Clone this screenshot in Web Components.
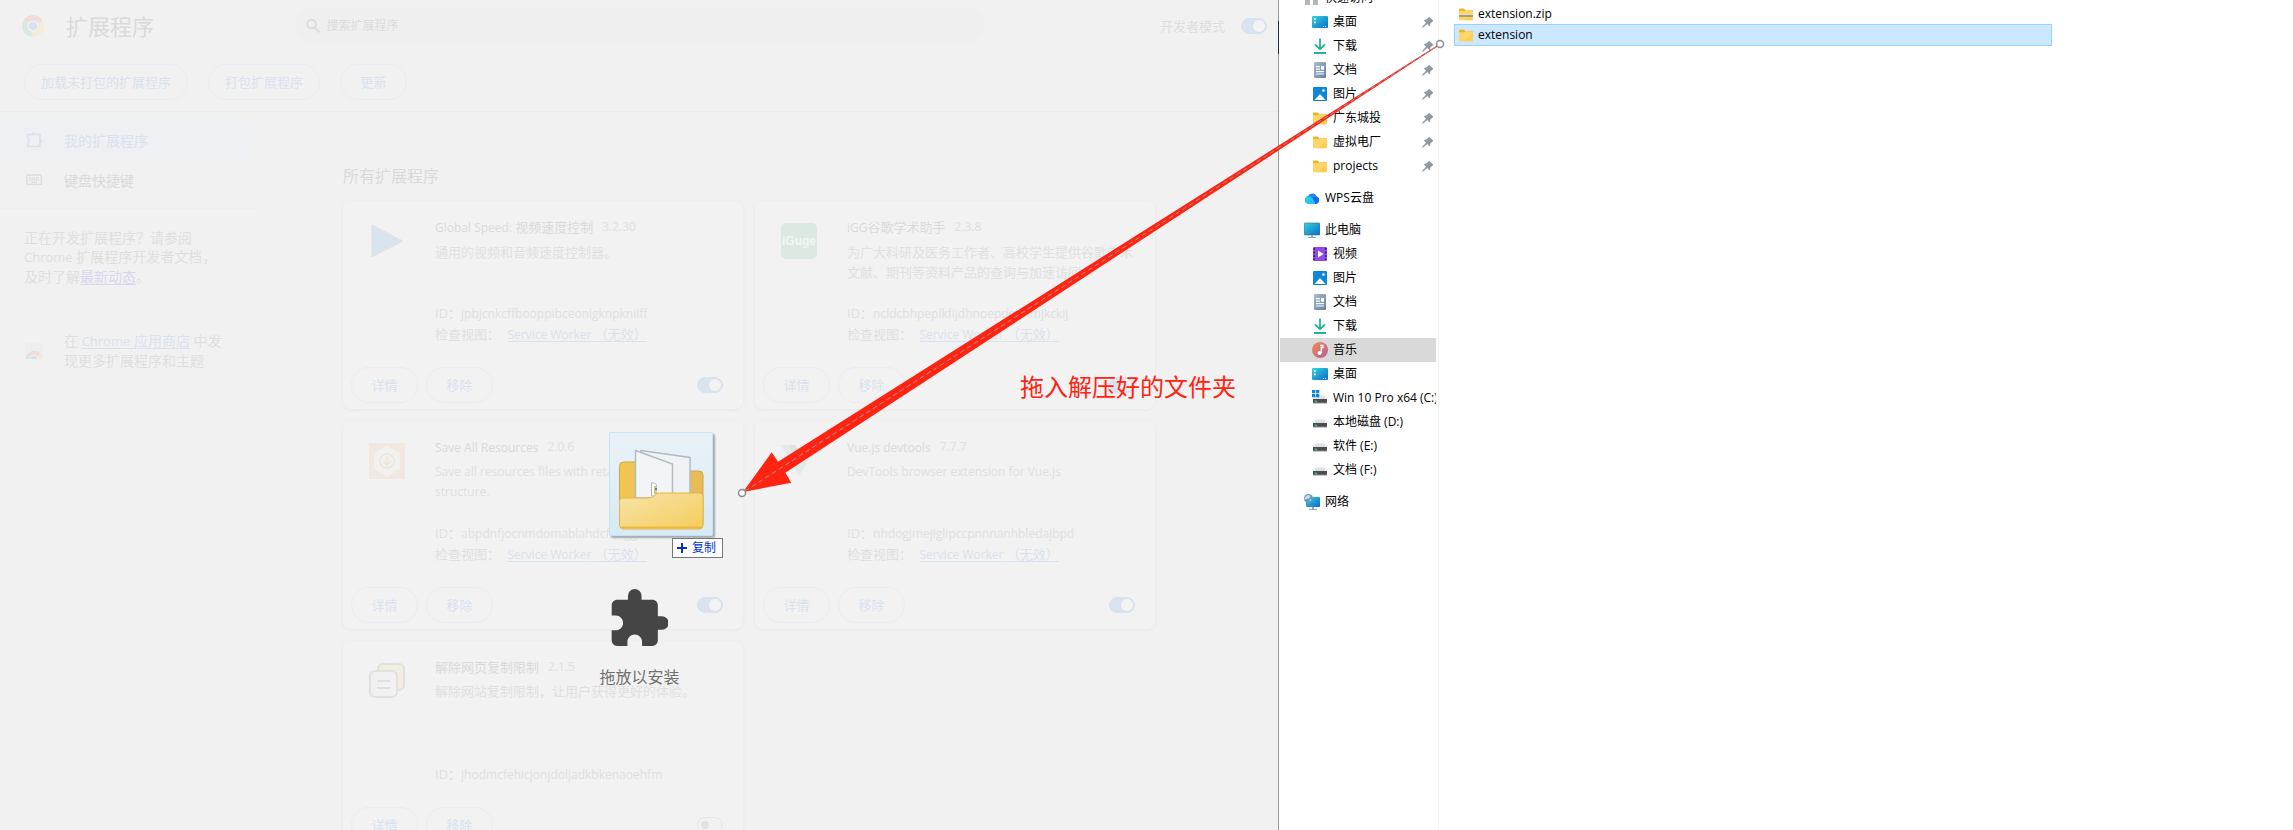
<!DOCTYPE html>
<html lang="zh-CN">
<head>
<meta charset="utf-8">
<title>扩展程序</title>
<style>
  html, body { margin: 0; height: 100%; }
  body {
    position: relative;
    display: grid;
    grid-template-columns: minmax(0, 1279fr) minmax(0, 1014fr);
    overflow: hidden;
    background: #fff;
    font-family: "Open Sans", "Noto Sans CJK SC", sans-serif;
    font-size: 13px;
    line-height: 20px;
  }
</style>
</head>
<body>
<ext-page>
  <ext-card name="Global Speed: 视频速度控制" version="3.2.30" icon="play" ext-id="jpbjcnkcffbooppibceonlgknpkniiff" worker enabled>通用的视频和音频速度控制器。</ext-card>
  <ext-card name="iGG谷歌学术助手" version="2.3.8" icon="iguge" ext-id="ncldcbhpeplkfijdhnoepdgdnmjkckij" worker enabled>为广大科研及医务工作者、高校学生提供谷歌学术文献、期刊等资料产品的查询与加速访问</ext-card>
  <ext-card lang="en" name="Save All Resources" version="2.0.6" icon="save" ext-id="abpdnfjocnmdomablahdcfnoggeeiedb" worker enabled>Save all resources files with retaining folder structure.</ext-card>
  <ext-card lang="en" name="Vue.js devtools" version="7.7.7" icon="vue" ext-id="nhdogjmejiglipccpnnnanhbledajbpd" worker enabled>DevTools browser extension for Vue.js</ext-card>
  <ext-card name="解除网页复制限制" version="2.1.5" icon="copy" ext-id="jhodmcfehicjonjdoljadkbkenaoehfm">解除网站复制限制，让用户获得更好的体验。</ext-card>
  <drop-hint slot="overlay">拖放以安装</drop-hint>
</ext-page>

<file-explorer>
  <tree-item slot="tree" icon="quick" root>快速访问</tree-item>
  <tree-item slot="tree" icon="desktop" pinned>桌面</tree-item>
  <tree-item slot="tree" icon="download" pinned>下载</tree-item>
  <tree-item slot="tree" icon="document" pinned>文档</tree-item>
  <tree-item slot="tree" icon="picture" pinned>图片</tree-item>
  <tree-item slot="tree" icon="folder" pinned>广东城投</tree-item>
  <tree-item slot="tree" icon="folder" pinned>虚拟电厂</tree-item>
  <tree-item slot="tree" icon="folder" pinned>projects</tree-item>
  <tree-item slot="tree" icon="cloud" root>WPS云盘</tree-item>
  <tree-item slot="tree" icon="pc" root>此电脑</tree-item>
  <tree-item slot="tree" icon="video">视频</tree-item>
  <tree-item slot="tree" icon="picture">图片</tree-item>
  <tree-item slot="tree" icon="document">文档</tree-item>
  <tree-item slot="tree" icon="download">下载</tree-item>
  <tree-item slot="tree" icon="music" selected>音乐</tree-item>
  <tree-item slot="tree" icon="desktop">桌面</tree-item>
  <tree-item slot="tree" icon="windisk">Win 10 Pro x64 (C:)</tree-item>
  <tree-item slot="tree" icon="disk">本地磁盘 (D:)</tree-item>
  <tree-item slot="tree" icon="disk">软件 (E:)</tree-item>
  <tree-item slot="tree" icon="disk">文档 (F:)</tree-item>
  <tree-item slot="tree" icon="network" root>网络</tree-item>
  <file-row icon="zip">extension.zip</file-row>
  <file-row icon="folder" selected>extension</file-row>
</file-explorer>

<drag-ghost>复制</drag-ghost>
<arrow-note>拖入解压好的文件夹</arrow-note>

<script>
const folder = `<svg viewBox="0 0 16 16"><path d="M1 3.2q0-.7.7-.7h4l1.400 1.600H14q.8 0 .8.8V8H1z" fill="#f0b429"/><path d="M1 5.200h5.400l1-.9h6.800q.7 0 .7.7v8.600q0 .7-.7.7H1.700q-.7 0-.7-.7z" fill="#fdd568"/><path d="M14.900 7v6.600q0 .7-.7.7H6z" fill="#fbc83f" opacity=".6"/></svg>`;
const disk = `<path d="M3.500 5.500h9L15 9H1z" fill="#dfe1e4"/><path d="M1 9h14v4H1z" fill="#4a4c50"/><path d="M1 12.500h14v1H1z" fill="#8d9095"/><path d="M3 10.500h2v1.300H3z" fill="#3fe06a"/>`;
const screenGrad = `<linearGradient id="g" x1="0" y1="0" x2="1" y2="1"><stop offset="0" stop-color="#35d3e0"/><stop offset="1" stop-color="#0b6cc4"/></linearGradient>`;
const ICONS = {
  chrome: `<svg viewBox="0 0 22 22"><path d="M11 11 1.500 5.500A11 11 0 0 1 20.500 5.500z" fill="#efdedd"/><path d="M11 11 1.500 5.500A11 11 0 0 0 11 22z" fill="#dce8df"/><path d="M11 11 20.500 5.500A11 11 0 0 1 10 22z" fill="#f4ecd8"/><circle cx="11" cy="11" r="5.500" fill="#f3f3f3"/><circle cx="11" cy="11" r="4.300" fill="#d7e2f2"/></svg>`,
  search: `<svg viewBox="0 0 16 16" fill="none" stroke="#dcdcdc" stroke-width="2"><circle cx="6.500" cy="6" r="4.300"/><path d="m9.700 9.500 4.600 4.700"/></svg>`,
  puzzleLine: `<svg viewBox="0 0 18 18"><path d="M2.500 3.500H15v12H2.500v-3.400q1.600-.6 1.600-2.600t-1.600-2.600z" fill="none" stroke="#d9e2ef" stroke-width="1.600" stroke-linejoin="round"/><path d="M6.500 3.200a2 2 0 0 1 4 0zM15.400 8a2 2 0 0 1 0 4z" fill="#d9e2ef"/></svg>`,
  keyboard: `<svg viewBox="0 0 18 18"><rect x="1.800" y="4" width="14.600" height="9.600" rx="1" fill="none" stroke="#dcdcdc" stroke-width="1.500"/><path d="M4 6.700h10M4 9h10" stroke="#dcdcdc" stroke-width="1.400" stroke-dasharray="1.600 .6"/><path d="M6 11.400h6" stroke="#dcdcdc" stroke-width="1.400"/></svg>`,
  store: `<svg viewBox="0 0 18 18"><path d="M0 1h18v16H0z" fill="#eeeeee"/><path d="M1 17a8 8 0 0 1 16 0z" fill="#efdcdb"/><path d="M1 17a8 8 0 0 1 2-5.300L9 17z" fill="#d9e7dc"/><path d="M17 17a8 8 0 0 0-2-5.300L9 17z" fill="#f4ebd3"/><path d="M4.600 17a4.400 4.400 0 0 1 8.800 0z" fill="#f3f3f3"/><path d="M5.800 17a3.200 3.200 0 0 1 6.400 0z" fill="#d3e0f2"/></svg>`,
  play: `<svg viewBox="0 0 36 36"><path d="M3 2.500v31L33 18z" fill="#d8e5f0" stroke="#e2e2e2" stroke-width="1.500" stroke-linejoin="round"/></svg>`,
  iguge: `<svg viewBox="0 0 36 36"><rect width="36" height="36" rx="5" fill="#dce9e3"/><text x="18" y="22" text-anchor="middle" font-family="Liberation Sans, sans-serif" font-size="12" font-weight="700" fill="#f3f5f4">iGuge</text></svg>`,
  save: `<svg viewBox="0 0 36 36"><path d="M0 0h36v36H0z" fill="#f1e8e1"/><path d="m18 2.500 13 7.700v15.600l-13 7.700-13-7.700V10.200z" fill="#f3f1ef"/><circle cx="18" cy="18" r="7" fill="none" stroke="#f0e5da" stroke-width="1.600"/><path d="M18 13.500v8m-3.500-3.200 3.500 3.500 3.500-3.500" fill="none" stroke="#f0e5da" stroke-width="1.600"/></svg>`,
  vue: `<svg viewBox="0 0 36 36"><path d="M0 2h7l11 19L29 2h7L18 33z" fill="#e1ece8"/><path d="M7 2h7l4 7 4-7h7L18 21z" fill="#e0e2e4"/></svg>`,
  copy: `<svg viewBox="0 0 36 36" stroke="#e0e0e0" stroke-width="2"><rect x="9" y="1" width="26" height="26" rx="5" fill="#f3eedd"/><rect x="1" y="8" width="27" height="26" rx="5" fill="#f1f1f1"/><path d="M8 18h13M8 25h13"/></svg>`,
  puzzle: `<svg viewBox="2 1 20.500 21"><path fill="#444544" d="M20.500 11H19V7c0-1.100-.9-2-2-2h-4V3.500a2.500 2.500 0 0 0-5 0V5H4c-1.100 0-1.990.9-1.990 2v3.800H3.500c1.490 0 2.700 1.210 2.700 2.700s-1.210 2.700-2.700 2.700H2V20c0 1.100.9 2 2 2h3.800v-1.500c0-1.490 1.210-2.700 2.700-2.700s2.700 1.210 2.700 2.700V22H17c1.100 0 2-.9 2-2v-4h1.500a2.500 2.500 0 0 0 0-5z"/></svg>`,
  quick: `<svg viewBox="0 0 16 16"><path d="M1 9h5v6H1zM9 9h5v6H9z" fill="#b5b5b5"/></svg>`,
  desktop: `<svg viewBox="0 0 16 16"><defs>${screenGrad}</defs><rect y="2" width="16" height="12" rx="1" fill="url(#g)"/><path d="M2 4.300h1.700v1.700H2zM2 7.500h1.700v1.700H2zM11 12h1v1h-1zM13 12h1v1h-1z" fill="#fff"/></svg>`,
  download: `<svg viewBox="0 0 16 16" fill="none" stroke="#20b591" stroke-width="1.800"><path d="M8 .5V11M3.200 6.500 8 11.300l4.800-4.800M2 15h12"/></svg>`,
  document: `<svg viewBox="0 0 16 16"><defs><linearGradient id="g" x1="0" y1="0" x2="1" y2="1"><stop offset="0" stop-color="#a9bcd0"/><stop offset="1" stop-color="#6580a3"/></linearGradient></defs><rect x="2" width="12" height="16" rx="1" fill="url(#g)"/><path d="M4 4h4v1.200H4zM4 6.500h4v1.200H4zM9 4h3v3.700H9zM4 9h8v1.200H4zM4 11.500h8v1H4z" fill="#fff"/></svg>`,
  picture: `<svg viewBox="0 0 16 16"><rect x="1" y="1" width="14" height="14" rx="1" fill="#1086d8"/><path d="m2.500 14 5.500-6 5.500 6z" fill="#fff"/><circle cx="11.500" cy="4.500" r="1.300" fill="#fff"/></svg>`,
  folder,
  zip: folder.replace('</svg>', '<path d="M1 8h14v3H1z" fill="#a79a78"/><path d="M1 8h14v1H1z" fill="#e8dcc0"/></svg>'),
  cloud: `<svg viewBox="0 0 16 16"><path d="M4.500 14a4 4 0 0 1-.6-7.800 4.700 4.700 0 0 1 8.700.3A3.900 3.900 0 0 1 11.800 14z" fill="#1b86f5"/><path d="M4.500 14a4 4 0 0 1-.6-7.800Q6.500 6 8 8l4 4.500-2 1.500z" fill="#23c8ea"/><path d="M8.500 8.500q2-2.500 4.100-2A3.900 3.900 0 0 1 11.800 14z" fill="#1769ee"/></svg>`,
  pc: `<svg viewBox="0 0 16 16"><defs>${screenGrad}</defs><rect y="1" width="16" height="12" rx="1" fill="url(#g)" stroke="#38719c" stroke-width=".6"/><path d="M7 13h2v2h3v1H4v-1h3z" fill="#9aa5ae"/></svg>`,
  video: `<svg viewBox="0 0 16 16"><rect x="1" y="1" width="14" height="14" rx="1" fill="#8f4be8"/><path d="M2.200 2v12M13.800 2v12" stroke="#3c1a78" stroke-width="1.600" stroke-dasharray="1.800 1.800"/><path d="m6 4.500 5.500 3.500L6 11.500z" fill="#fff"/></svg>`,
  music: `<svg viewBox="0 0 16 16"><defs><linearGradient id="g" x1="0" y1="0" x2="1" y2="1"><stop offset="0" stop-color="#f58a4b"/><stop offset="1" stop-color="#b0609f"/></linearGradient></defs><circle cx="8" cy="8" r="8" fill="url(#g)"/><path d="M8 3.500h3v2H9.300V11" fill="none" stroke="#fff" stroke-width="1.300"/><circle cx="7.500" cy="11" r="2" fill="#fff"/></svg>`,
  disk: `<svg viewBox="0 0 16 16">${disk}</svg>`,
  windisk: `<svg viewBox="0 0 16 16">${disk}<path d="M0 0h3.300v3.300H0zM4 0h3.300v3.300H4zM0 4h3.300v3.300H0zM4 4h3.300v3.300H4z" fill="#0a86dc"/></svg>`,
  network: `<svg viewBox="0 0 16 16"><defs>${screenGrad}</defs><rect x="2" y="3" width="14" height="10" rx="1" fill="url(#g)"/><path d="M8 13h2v2h3v1H5v-1h3z" fill="#9aa5ae"/><circle cx="4.500" cy="4.500" r="4.500" fill="#5f9cbf"/><path d="M2 2q3-2 4 0T3 5 1 4zM5 6l2-1v2z" fill="#bfe0ea"/></svg>`,
  pin: `<svg viewBox="0 0 12 12"><path d="M7 .5 11.500 5 10 5.900 8.500 7.400 7.900 10.400 5.200 8 1.200 11.500 0 11.800.5 10.500 4 6.800 1.600 4.100l3-.5L6.200 2z" fill="#8f9aa3"/></svg>`
};

class Base extends HTMLElement {
  constructor() {
    super();
    this.attachShadow({ mode: "open" });
  }
  connectedCallback() {
    this.shadowRoot.innerHTML = `<style>*{box-sizing:border-box}a{text-underline-offset:2px}${this.css()}</style>${this.html()}`;
  }
  attr(name) { return this.getAttribute(name) || ""; }
}

customElements.define("app-icon", class extends Base {
  css() { return `:host{display:block;flex:none;width:16px;height:16px}svg{display:block;width:100%;height:100%}`; }
  html() { return ICONS[this.attr("name")]; }
});

customElements.define("toggle-switch", class extends Base {
  css() {
    return `:host{display:block}
      label{display:flex;align-items:center;gap:16px;color:#dedede}
      input{appearance:none;margin:0;width:26px;height:16px;border-radius:8px;border:1px solid #e6e6e6;background:#f1f1f1;display:flex;align-items:center;padding:0 3px}
      input::before{content:"";width:8px;height:8px;border-radius:50%;background:#e2e2e2}
      input:checked{background:#d9e2ef;border-color:#d9e2ef;justify-content:flex-end;padding:0 1px}
      input:checked::before{width:12px;height:12px;background:#f3f3f3}`;
  }
  html() {
    const on = this.hasAttribute("on") ? "checked" : "";
    return `<label><slot></slot><input type="checkbox" ${on} aria-label="${this.attr("label")}"></label>`;
  }
});

customElements.define("pill-button", class extends Base {
  css() {
    return `:host{display:block}
      button{display:block;min-width:67px;height:36px;padding:0 16px;border:1px solid #eaecf2;border-radius:18px;background:none;color:#d9e2ef;font:inherit}`;
  }
  html() { return `<button type="button"><slot></slot></button>`; }
});

customElements.define("ext-toolbar", class extends Base {
  css() {
    return `:host{display:block;border-bottom:1px solid #ececec;color:#dadada}
      .top{display:flex;align-items:center;height:52px;padding:0 12px 0 22px}
      .brand{flex:1;display:flex;align-items:center;gap:22px}
      .brand app-icon{width:22px;height:22px}
      h1{margin:0;font-size:22px;line-height:32px;font-weight:400}
      .search{flex:0 1 690px;height:36px;margin-right:10px;border-radius:18px;background:#efefef;display:flex;align-items:center;gap:6px;padding:0 10px}
      input{flex:1;border:0;padding:0;background:none;outline:0;font:inherit;font-size:12px}
      input::placeholder{color:#dcdcdc;opacity:1}
      .dev{flex:1;display:flex;justify-content:flex-end}
      .actions{display:flex;gap:20px;padding:12px 24px 11px}`;
  }
  html() {
    return `<div class="top"><div class="brand"><app-icon name="chrome"></app-icon><h1>扩展程序</h1></div>
      <label class="search"><app-icon name="search"></app-icon><input type="search" placeholder="搜索扩展程序" aria-label="搜索扩展程序"></label>
      <div class="dev"><toggle-switch on label="开发者模式">开发者模式</toggle-switch></div></div>
      <div class="actions"><pill-button>加载未打包的扩展程序</pill-button><pill-button>打包扩展程序</pill-button><pill-button>更新</pill-button></div>`;
  }
});

customElements.define("ext-sidebar", class extends Base {
  css() {
    return `:host{display:block;width:256px;font-size:14px;line-height:19px;color:#dfdfdf}
      nav{padding:8px 0;border-bottom:1px solid #eee;height:97px}
      nav a{display:flex;align-items:center;gap:21px;height:40px;padding-left:25px;border-radius:0 20px 20px 0;text-decoration:none;color:#dadada}
      nav a.on{background:#eef0f3;color:#d9e2ef}
      app-icon{width:18px;height:18px}
      p{margin:0}
      .latin{font-size:13px}
      .docs{padding:19px 24px 0}
      .docs a{color:#d9d6ee}
      .store{display:flex;align-items:center;gap:21px;padding:45px 24px 0 25px}
      .store a{color:#d9e2ef}`;
  }
  html() {
    return `<nav><a class="on" href="#extensions"><app-icon name="puzzleLine"></app-icon>我的扩展程序</a>
      <a href="#shortcuts"><app-icon name="keyboard"></app-icon>键盘快捷键</a></nav>
      <p class="docs">正在开发扩展程序？请参阅<br><span class="latin">Chrome</span> 扩展程序开发者文档，<br>及时了解<a href="#news">最新动态</a>。</p>
      <div class="store"><app-icon name="store"></app-icon><p>在 <a href="#store"><span class="latin">Chrome</span> 应用商店</a> 中发<br>现更多扩展程序和主题</p></div>`;
  }
});

customElements.define("ext-page", class extends Base {
  css() {
    return `:host{display:block;position:relative;height:100vh;overflow:hidden;background:#f1f1f1}
      :host::after{content:"";position:absolute;right:0;top:0;bottom:0;width:1px;background:linear-gradient(#999 21px,#1c2c3c 21px 54px,#999 54px)}
      .body{display:flex}
      ext-sidebar{flex:none}
      main{flex:1;padding:52px 0 0 87px}
      h2{margin:0 0 13px;font-size:16px;line-height:24px;font-weight:400;color:#dadada}
      .grid{display:grid;grid-template-columns:repeat(auto-fill,400px);gap:12px}
      .overlay{position:absolute;inset:0;display:flex;align-items:flex-end;justify-content:center;pointer-events:none}`;
  }
  html() {
    return `<ext-toolbar></ext-toolbar><div class="body"><ext-sidebar></ext-sidebar>
      <main><h2>所有扩展程序</h2><div class="grid"><slot></slot></div></main></div>
      <div class="overlay"><slot name="overlay"></slot></div>`;
  }
});

customElements.define("ext-card", class extends Base {
  css() {
    return `:host{display:flex;flex-direction:column;height:208px;box-sizing:border-box;border-radius:8px;background:#f2f2f2;box-shadow:0 1px 3px 1px #ebebeb;color:#e0e0e0}
      .info{flex:1;display:flex;gap:30px;padding:16px 20px 22px 26px}
      .info app-icon{width:36px;height:36px;margin-top:6px}
      .text{flex:1;display:flex;flex-direction:column;min-width:0}
      h3{margin:0 0 4px;font-size:13px;line-height:20px;font-weight:400;color:#dadada;display:flex;gap:9px}
      .version{color:#e0e0e0}
      .latin,:host([lang=en]) p{font-size:12px}
      p{margin:0}
      .meta{margin-top:auto;white-space:nowrap}
      .meta a{margin-left:4px;color:#d9e2ef}
      footer{display:flex;align-items:center;gap:8px;padding:0 20px 6px 8px}
      toggle-switch{margin-left:auto}`;
  }
  html() {
    const name = this.attr("name").replace(/[\x20-\x7e]+/g, '<span class="latin">$&</span>');
    const worker = `<div>检查视图： <a href="#worker"><span class="latin">Service Worker</span> （无效）</a></div>`;
    return `<div class="info"><app-icon name="${this.attr("icon")}"></app-icon><div class="text">
      <h3><span>${name}</span><span class="version latin">${this.attr("version")}</span></h3><p><slot></slot></p>
      <div class="meta"><div>ID：<span class="latin">${this.attr("ext-id")}</span></div>${this.hasAttribute("worker") ? worker : ""}</div></div></div>
      <footer><pill-button>详情</pill-button><pill-button>移除</pill-button><toggle-switch ${this.hasAttribute("enabled") ? "on" : ""} label="${this.attr("name")}"></toggle-switch></footer>`;
  }
});

customElements.define("drop-hint", class extends Base {
  css() {
    return `:host{display:flex;flex-direction:column;align-items:center;gap:19px;margin-bottom:141px;font-size:16px;line-height:24px;color:#707070}
      app-icon{width:57px;height:57px}`;
  }
  html() { return `<app-icon name="puzzle"></app-icon><span><slot></slot></span>`; }
});

customElements.define("file-explorer", class extends Base {
  css() {
    return `:host{display:flex;height:100vh;overflow:hidden;background:#fff;color:#000;font-size:12px;line-height:20px}
      nav{flex:none;width:160px;margin-top:-14px;padding-right:2px;border-right:1px solid #f2f2f2}
      .files{flex:1;padding:3px 0 0 15px}`;
  }
  html() { return `<nav><slot name="tree"></slot></nav><div class="files"><slot></slot></div>`; }
});

customElements.define("tree-item", class extends Base {
  css() {
    return `:host{display:flex;align-items:center;gap:5px;height:24px;margin:0 0 0 1px;padding-left:32px;white-space:nowrap;overflow:hidden}
      :host([root]){padding-left:24px;margin-top:8px}
      :host([root]:first-child){margin-top:0}
      :host([selected]){background:#d9d9d9}
      .label{flex:1;min-width:0;overflow:hidden}
      .pin{width:12px;height:12px;margin-right:2px}`;
  }
  html() {
    return `<app-icon name="${this.attr("icon")}"></app-icon><span class="label"><slot></slot></span>${this.hasAttribute("pinned") ? `<app-icon class="pin" name="pin"></app-icon>` : ""}`;
  }
});

customElements.define("file-row", class extends Base {
  css() {
    return `:host{display:flex;align-items:center;gap:4px;box-sizing:border-box;max-width:598px;height:21px;padding-left:3px;border:1px solid transparent}
      :host([selected]){height:22px;background:#cce8ff;border-color:#99d1ff}`;
  }
  html() { return `<app-icon name="${this.attr("icon")}"></app-icon><span><slot></slot></span>`; }
});

/* Thumbnail that follows the cursor while a folder is dragged */
customElements.define("drag-ghost", class extends Base {
  css() {
    return `:host{position:absolute;left:609px;top:432px;display:flex;flex-direction:column;gap:2px;width:114px;font-size:12px;line-height:18px}
      svg{display:block}
      .thumb{width:104px;height:104px;box-sizing:border-box;border:1px solid #c4e4f5;border-radius:2px;background:linear-gradient(#e9f2f7,#d8eaf5);box-shadow:2px 2px 2px #a5a9ac;}
      .tip{align-self:flex-end;display:flex;align-items:center;gap:5px;height:20px;padding:0 6px 0 4px;border:1px solid #767676;background:#fff;color:#0033cc}`;
  }
  html() {
    return `<div class="thumb"><svg width="102" height="102" viewBox="1 1 102 102">
      <defs><linearGradient id="b" x1="0" x2="1"><stop offset="0" stop-color="#f3c651"/><stop offset="1" stop-color="#e7bc58"/></linearGradient>
      <linearGradient id="f" x1="0" y1="0" x2="1" y2="1"><stop offset="0" stop-color="#f7e4aa"/><stop offset="1" stop-color="#f6cd5c"/></linearGradient></defs>
      <path d="M10.500 34q0-4 4-4H28l8 9h54q4 0 4 4v50H10.500z" fill="url(#b)" stroke="#cfa544"/>
      <path d="m32 18.500 49 7V66H32z" fill="#eff3f5" stroke="#b3bbc0" stroke-width="1.500"/>
      <path d="m26.500 18.500 37 13.500V66h-37z" fill="#f1f5f7" stroke="#b3bbc0" stroke-width="1.500"/>
      <path d="M42.500 51h3l2 2v11h-5z" fill="#fff" stroke="#b6b6b6"/><path d="M45 54h3v8h-3z" fill="#bfcf85"/><path d="M46 56h2v2h-2z" fill="#66788c"/>
      <path d="M10.500 69q0-3 3-3H39q5 0 7-3 2-2 5-2h40q3 0 3 3v29q0 4-4 4H14.500q-4 0-4-4z" fill="url(#f)" stroke="#e3b648"/>
      <path d="M12 95.500h81" stroke="#edb93c" stroke-width="2"/></svg></div>
      <div class="tip"><svg width="10" height="10" viewBox="0 0 10 10"><path d="M5 0v10M0 5h10" stroke="#0033cc" stroke-width="2"/></svg><slot></slot></div>`;
  }
});

/* Free-placed annotation: arrow from the folder to the drop area, with its caption */
customElements.define("arrow-note", class extends Base {
  css() {
    return `:host{position:absolute;inset:0;pointer-events:none;overflow:hidden}
      svg{position:absolute;left:0;top:0}
      span{position:absolute;left:1020px;top:369px;font-size:24px;line-height:36px;color:#ff2312;white-space:nowrap}`;
  }
  html() {
    return `<svg width="1460" height="520" viewBox="0 0 1460 520">
      <path d="M743 492 771.700 452.300 778 461.700 1437 45.500 1437.500 46.500 785.300 472.700 791.300 482.700z" fill="#ff2312"/>
      <path d="M745 491 1437 46" stroke="#999" stroke-dasharray="5 3"/>
      <g fill="#fff" stroke="#8c8c8c" stroke-width="1.500"><circle cx="742" cy="493" r="3.500"/><circle cx="1440" cy="44" r="3.500"/></g></svg>
      <span><slot></slot></span>`;
  }
});
</script>
</body>
</html>
